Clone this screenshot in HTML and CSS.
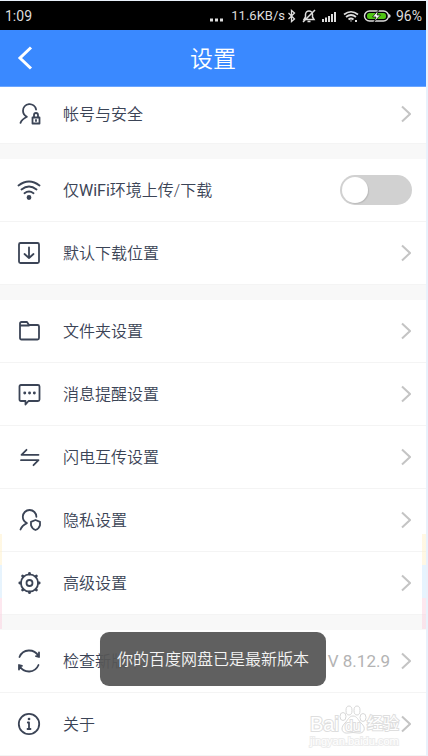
FILE: index.html
```html
<!DOCTYPE html>
<html lang="zh-CN">
<head>
<meta charset="utf-8">
<meta name="viewport" content="width=device-width, initial-scale=1">
<title>设置</title>
<link rel="stylesheet" href="styles.css">
</head>
<body>
<svg class="defs" aria-hidden="true">
  <symbol id="chevron" viewBox="0 0 10 18"><path d="M1 1.500l8 7.500-8 7.500"/></symbol>
</svg>
<div class="phone">
  <div class="status">
    <span class="time">1:09</span>
    <svg class="dots" viewBox="0 0 16 16"><path d="M1 10.500h3v3H1zM6 10.500h3v3H6zM11 10.500h3v3h-3z" fill="#ddd"/></svg>
    <span class="speed">11.6KB/s</span>
    <svg class="bt" viewBox="0 0 10 16" fill="none" stroke="#ddd" stroke-width="1.300"><path d="M1.500 5l6 6L4.500 13.500V2.500l3 2.500-6 6"/></svg>
    <svg class="mute" viewBox="0 0 16 16" fill="none" stroke="#ddd" stroke-width="1.500"><path d="M3 11.500h10L11.500 9V6.500a3.500 3.500 0 0 0-7 0V9zM6.500 13.500h3M14 2L2 14"/></svg>
    <svg class="signal" viewBox="0 0 18 16" fill="#ddd"><path d="M1 11h2v3H1zM4 9.500h2V14H4zM7 8h2v6H7zM10 6h2v8h-2zM13 4h2v10h-2z"/></svg>
    <svg class="net" viewBox="0 0 18 16" fill="none" stroke="#ddd" stroke-width="1.700"><path d="M2 6.500q7-5.500 14 0M4 9q5-4 10 0M6.500 11.500q2.500-2 5 0"/><path d="M8 12.500h2L9 14zM13 12h2v2h-2z" fill="#ddd" stroke="none"/></svg>
    <svg class="battery" viewBox="0 0 28 16"><rect x="1.500" y="3" width="24" height="10" rx="5" fill="none" stroke="#ddd" stroke-width="1.400"/><rect x="4" y="5" width="19" height="6" rx="2.500" fill="#4fc414"/><path d="M26 6l1.500 1v2L26 10z" fill="#ddd"/><path d="M15.500 2l-6 7h3.500l-2 5 6.500-7H14z" fill="#fff" stroke="#000" stroke-width=".7"/></svg>
    <span class="percent">96%</span>
  </div>
  <header class="bar">
    <a class="back" href="#" aria-label="返回"><svg viewBox="0 0 16 26"><path d="M14 2.500L3 13l11 10.500"/></svg></a>
    <h1>设置</h1>
  </header>
  <main>
    <section class="group first">
      <a class="row" href="#">
        <svg class="icon" viewBox="0 0 24 24"><path d="M3.500 20.800c1-2.400 2.800-4.200 6.400-6-2.300-1.200-3.900-3.400-3.900-6a6.600 6.600 0 0 1 13.100-1.300"/><path d="M15.500 15.500h7v6h-7zM17 15v-2a2 2 0 0 1 4 0v2M19 18v1"/></svg>
        <span class="label">帐号与安全</span>
        <svg class="chev"><use href="#chevron"/></svg>
      </a>
    </section>
    <section class="group">
      <label class="row" for="wifi">
        <svg class="icon" viewBox="0 0 24 24"><path d="M1.500 7.500q10.500-8 21 0M4.500 11.500q7.500-6 15 0M7.500 15.200q4.500-3.400 9 0"/><circle cx="12" cy="19.500" r="1.500" fill="#3b4456"/></svg>
        <span class="label">仅<span class="latin">WiFi</span>环境上传/下载</span>
        <input class="switch" id="wifi" type="checkbox" role="switch">
      </label>
      <a class="row" href="#">
        <svg class="icon" viewBox="0 0 24 24"><rect x="2" y="2" width="20" height="20" rx="1.500"/><path d="M12 6.500v10.500M7.500 13L12 17l4.500-4"/></svg>
        <span class="label">默认下载位置</span>
        <svg class="chev"><use href="#chevron"/></svg>
      </a>
    </section>
    <section class="group">
      <a class="row" href="#">
        <svg class="icon" viewBox="0 0 24 24"><path d="M3 7V4.500Q3 3 4.500 3h5.500l2 3H20.500q1.500 0 1.500 1.500V19q0 1.500-1.500 1.500h-16Q3 20.500 3 19zM3 6.500h9"/></svg>
        <span class="label">文件夹设置</span>
        <svg class="chev"><use href="#chevron"/></svg>
      </a>
      <a class="row" href="#">
        <svg class="icon" viewBox="0 0 24 24"><path d="M4 3h17q1.500 0 1.500 1.500v13q0 1.500-1.500 1.500H11.500l-3 3.500V19H4Q2.500 19 2.500 17.500v-13Q2.500 3 4 3z"/><path d="M7.700 11h.1M12.500 11h.1M17.300 11h.1" stroke-width="2.800"/></svg>
        <span class="label">消息提醒设置</span>
        <svg class="chev"><use href="#chevron"/></svg>
      </a>
      <a class="row" href="#">
        <svg class="icon" viewBox="0 0 24 24"><path d="M21.500 9.800H4.500l5-5M4 15.200h17.500l-5 5"/></svg>
        <span class="label">闪电互传设置</span>
        <svg class="chev"><use href="#chevron"/></svg>
      </a>
      <a class="row" href="#">
        <svg class="icon" viewBox="0 0 24 24"><path d="M3.500 21.500c1-2.600 2.800-4.600 6.400-6.400-2.300-1.200-4.100-3.500-4.100-6.300a6.800 6.800 0 0 1 13.600 0"/><path d="M18.500 12l4.500 1.800v3.500q-1 3.500-4.500 4.700-3.500-1.200-4.500-4.700v-3.500z"/></svg>
        <span class="label">隐私设置</span>
        <svg class="chev"><use href="#chevron"/></svg>
      </a>
      <a class="row" href="#">
        <svg class="icon" viewBox="0 0 24 24"><circle cx="12.500" cy="12" r="8.600"/><circle cx="12.500" cy="12" r="3"/><path d="M12.500 3V2.300M12.500 21v.7M3.500 12H2.800M21.500 12h.7M6.100 5.600l-.5-.5M18.900 18.400l.5.5M6.100 18.400l-.5.5M18.900 5.600l.5-.5" stroke-width="2.800"/></svg>
        <span class="label">高级设置</span>
        <svg class="chev"><use href="#chevron"/></svg>
      </a>
    </section>
    <section class="group">
      <a class="row" href="#">
        <svg class="icon" viewBox="0 0 24 24"><path d="M2.500 8C6 -.5 17 -.5 21.500 7M22 3.500V8l-3-.8M21.500 16C18 24.500 7 24.500 2.500 17M2 20.500V16l3 .8"/></svg>
        <span class="label">检查新版本</span>
        <span class="version">V 8.12.9</span>
        <svg class="chev"><use href="#chevron"/></svg>
      </a>
      <a class="row" href="#">
        <svg class="icon" viewBox="0 0 24 24"><circle cx="12" cy="12" r="10.200"/><path d="M10.800 10.500H12V17M10.500 17h3"/><path d="M12 7h.1" stroke-width="2.600"/></svg>
        <span class="label">关于</span>
        <svg class="chev"><use href="#chevron"/></svg>
      </a>
      <div class="mark">
        <div class="brand"><span>Bai</span><span class="paw"><svg viewBox="0 0 28 30"><ellipse cx="4" cy="11.500" rx="3" ry="4"/><ellipse cx="10" cy="5.500" rx="3" ry="4.500"/><ellipse cx="18" cy="5.500" rx="3" ry="4.500"/><ellipse cx="24" cy="12.500" rx="3" ry="4"/><path d="M14 11c-4 0-5 4-8 7-6 6-2 11 3 10q5-1 10 0c6 1 9-5 3-10-3-3-4-7-8-7z"/></svg><span class="du">du</span></span><span class="cn">经验</span></div>
        <div class="site">jingyan.baidu.com</div>
      </div>
    </section>
  </main>
  <div class="edge left"></div>
  <div class="edge right"></div>
  <div class="toast" role="status">你的百度网盘已是最新版本</div>
</div>
</body>
</html>
```
FILE: styles.css
```css
* { box-sizing: border-box; }
body {
  margin: 0;
  padding: 1px 2px 0 0;
  background: #e9f1fb;
  font-family: Roboto, "Noto Sans CJK SC", sans-serif;
  font-size: 16px;
  color: #3b4456;
}
a { color: inherit; text-decoration: none; }
svg { display: block; flex: none; }
.defs { position: absolute; width: 0; height: 0; }
.phone { position: relative; background: #f8f8f8; overflow: hidden; }

.status {
  display: flex;
  align-items: center;
  height: 29px;
  padding: 0 4px 0 5px;
  background: #000;
  color: #ddd;
  font-size: 14px;
}
.status svg { height: 16px; }
.time { margin-right: auto; }
.speed { font-size: 13px; margin: 0 2px 0 6px; }
.dots { width: 16px; }
.bt { width: 10px; margin-right: 4px; }
.mute { width: 16px; margin-right: 4px; }
.signal { width: 18px; margin-right: 3px; }
.net { width: 18px; margin-right: 3px; }
.battery { width: 28px; margin-right: 5px; }

.bar {
  display: grid;
  grid-template-columns: 48px 1fr 48px;
  align-items: center;
  height: 57px;
  background: #3a89ff;
  border-bottom: 1px solid #6ba6ff;
  color: #fff;
}
.back { padding-left: 17px; }
.back svg { width: 16px; height: 26px; fill: none; stroke: #fff; stroke-width: 3; }
h1 {
  margin: 0;
  padding-top: 4px;
  font-size: 23px;
  line-height: 32px;
  font-weight: 350;
  text-align: center;
}

.group { position: relative; background: #fff; margin-bottom: 15px; }
.group:last-child { margin-bottom: 0; }
.row {
  display: flex;
  align-items: center;
  height: 63px;
  padding: 0 15px 0 17px;
  border-bottom: 1px solid #f4f4f4;
}
.first .row { height: 57px; padding-bottom: 3px; }
.icon {
  width: 24px;
  height: 24px;
  margin-right: 22px;
  fill: none;
  stroke: #3b4456;
  stroke-width: 1.8;
  stroke-linecap: round;
  stroke-linejoin: round;
}
.label { flex: 1; padding-top: 2px; line-height: 24px; font-weight: 350; }
.latin { font-weight: 400; }
.chev { width: 10px; height: 18px; fill: none; stroke: #c4c4c4; stroke-width: 2; }
.version { color: #b3b3b3; font-size: 17px; margin-right: 11px; }

.switch {
  appearance: none;
  width: 72px;
  height: 30px;
  margin: 0 -1px 0 0;
  padding: 2px;
  border-radius: 15px;
  background: #d1d1d1;
}
.switch::before {
  content: "";
  display: block;
  width: 26px;
  height: 26px;
  border-radius: 50%;
  background: #fff;
  box-shadow: 1px 1px 1px #bbb;
}
.switch:checked { background: #3a89ff; }
.switch:checked::before { margin-left: auto; }

.toast {
  position: absolute;
  left: 50%;
  bottom: 70px;
  transform: translateX(-50%);
  padding: 16px 17px 14px;
  border-radius: 9px;
  background: rgba(86, 86, 86, .94);
  color: #f4f4f4;
  line-height: 24px;
  font-weight: 350;
  white-space: nowrap;
}

.edge {
  position: absolute;
  bottom: 127px;
  height: 95px;
  opacity: .5;
  background: linear-gradient(#fff0c8 33%, #cfe8fb 33% 67%, #fbd0df 67%);
}
.left { left: 0; width: 2px; }
.right { right: 0; width: 4px; }

.mark {
  position: absolute;
  right: 26px;
  bottom: 9px;
  width: 90px;
  color: #fff;
  font-family: "Liberation Sans", "Noto Sans CJK SC", sans-serif;
  -webkit-text-stroke: 2px #dedede;
  paint-order: stroke fill;
  pointer-events: none;
}
.brand { display: flex; align-items: flex-end; font-size: 20px; line-height: 22px; font-weight: 400; }
.paw { position: relative; width: 28px; height: 30px; }
.paw svg { width: 28px; height: 30px; fill: #fff; stroke: #d8d8d8; paint-order: normal; }
.du { position: absolute; left: 6px; bottom: 0; font-size: 14px; line-height: 18px; }
.cn { font-size: 16px; white-space: nowrap; }
.site { font-size: 11px; line-height: 12px; -webkit-text-stroke: 2px #ececec; }
```
